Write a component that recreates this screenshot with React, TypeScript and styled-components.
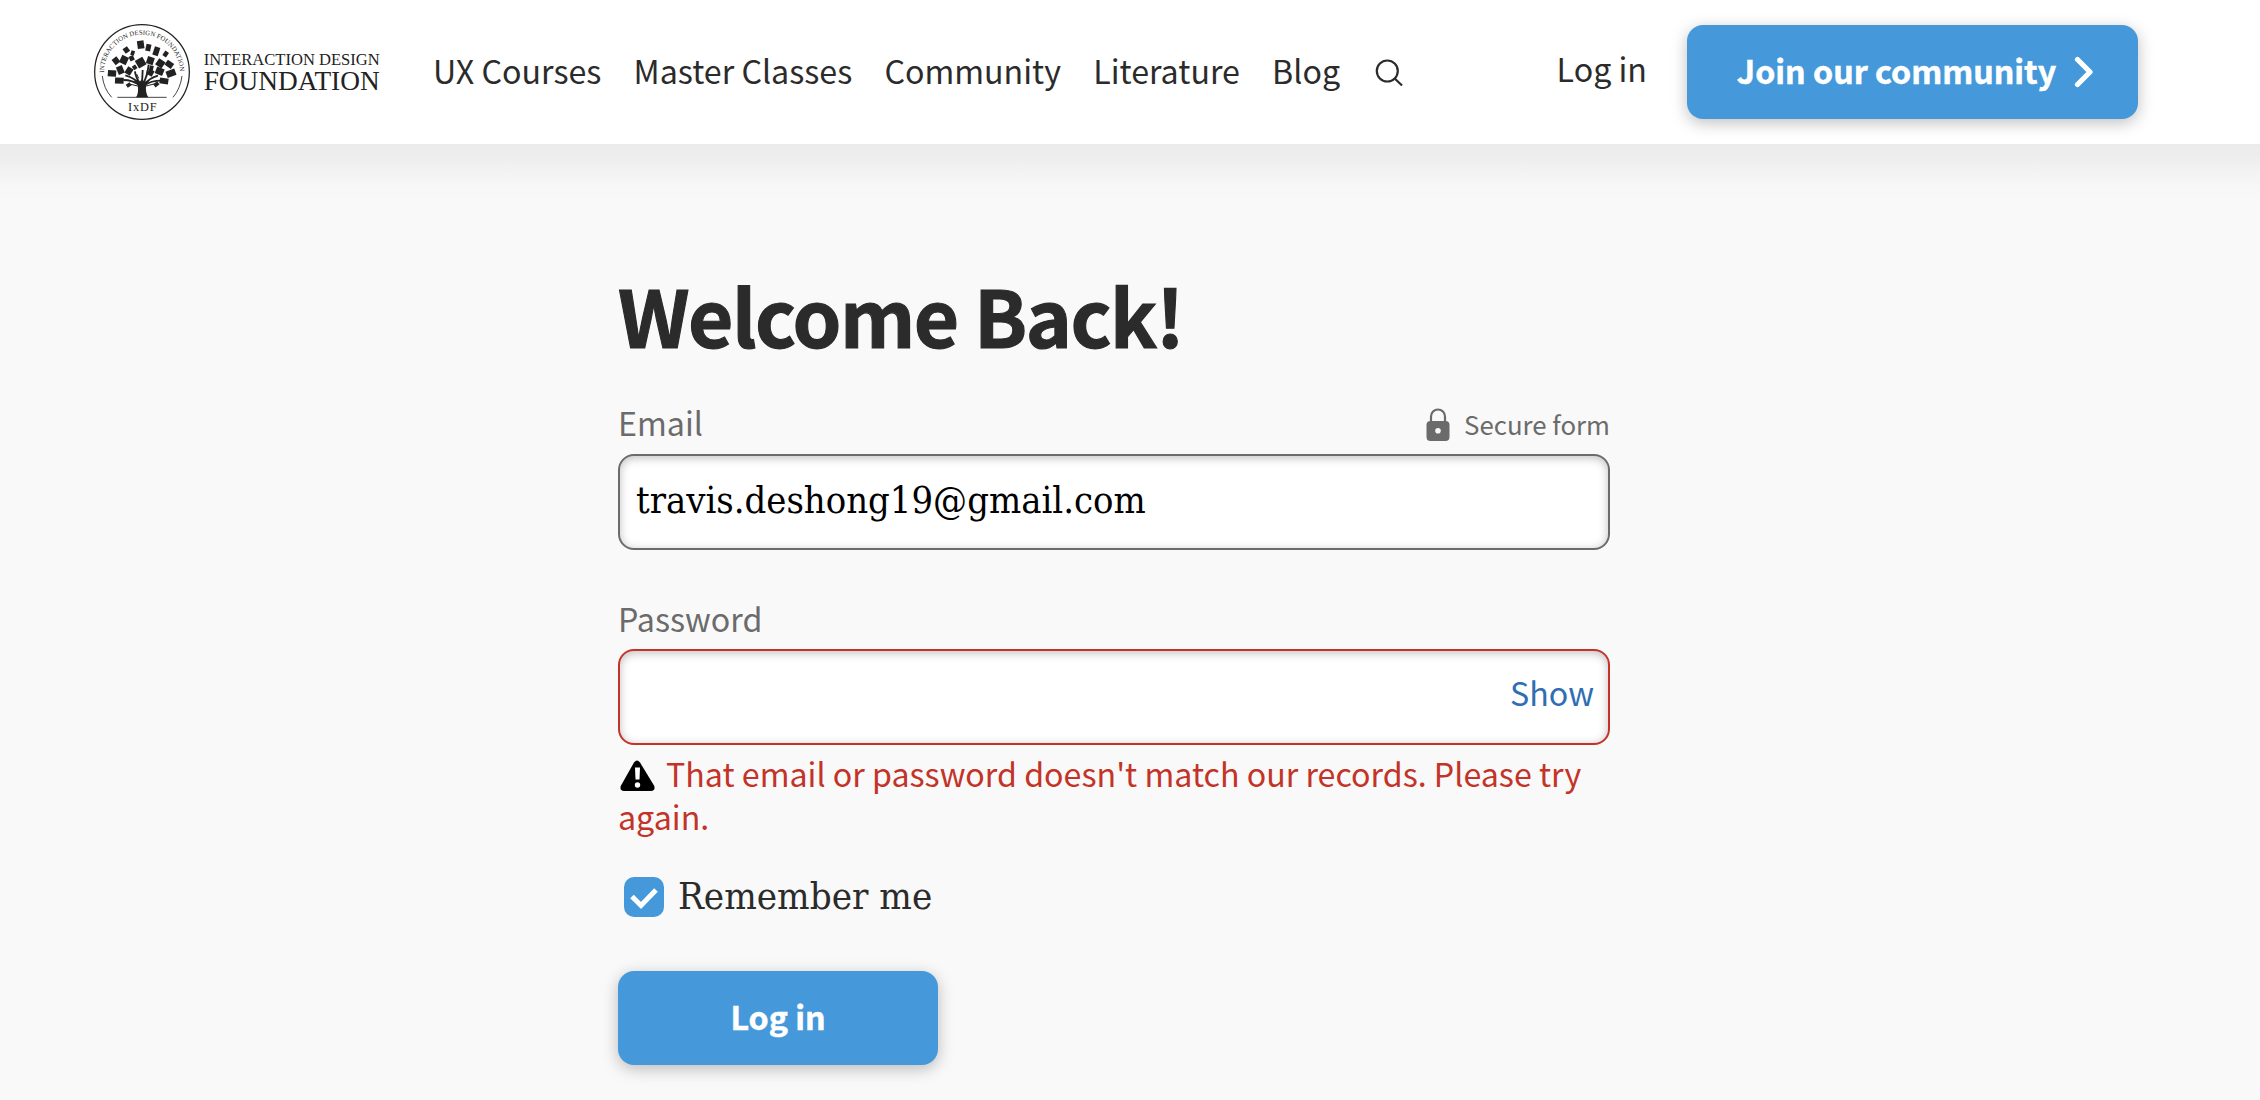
import { useState } from 'react'
import styled, { createGlobalStyle, css } from 'styled-components'

const sans = `'Noto Sans CJK SC', 'Noto Sans', sans-serif`
const serif = `'DejaVu Serif Condensed', 'DejaVu Serif', serif`

const GlobalStyle = createGlobalStyle`
  * {
    box-sizing: border-box;
  }

  body {
    margin: 0;
    min-height: 1100px;
    background: #f9f9f9;
    color: #2b2b2b;
    font-family: ${sans};
    font-size: 32.2px;
  }
`

const Header = styled.header`
  display: flex;
  align-items: center;
  height: 144px;
  padding: 0 122px 0 93px;
  background: #fff;
`

const Main = styled.main`
  padding: 124px 0 0 618px;
  background: linear-gradient(#ebebeb, #eeeeee 14px, #f5f5f5 34px, #f9f9f9 56px);
`

const Logo = styled.svg`
  display: block;
  width: 288px;
  height: 98px;
  flex: none;
  overflow: visible;
`

const Nav = styled.nav`
  display: flex;
  align-items: center;
  gap: 32.2px;
  margin-left: 52px;
  padding-bottom: 4px;
`

const NavLink = styled.a`
  color: inherit;
  line-height: 48px;
  white-space: nowrap;
`

const LoginLink = styled(NavLink)`
  margin-left: auto;
  margin-right: 40px;
  padding-bottom: 8px;
`

const SearchIcon = styled.svg`
  width: 28px;
  height: 28px;
  margin: 5px 0 0 3px;
`

const button = css`
  display: flex;
  align-items: center;
  justify-content: center;
  height: 94px;
  padding: 0 0 5px;
  border: 0;
  border-radius: 16px;
  background: #4599da;
  box-shadow: 0 4px 16px rgba(0, 0, 0, 0.25);
  color: #fff;
  font-family: ${sans};
  font-size: 32.2px;
  font-weight: 700;
  -webkit-text-stroke: 0.5px #fff;
`

const JoinButton = styled.button`
  ${button}
  width: 451px;
  padding-left: 6px;
  gap: 18px;
`

const SubmitButton = styled.button`
  ${button}
  width: 320px;
  margin-top: 54px;
`

const Chevron = styled.svg`
  width: 20px;
  height: 32px;
  margin-top: 4px;
`

const Form = styled.form`
  display: flex;
  flex-direction: column;
  width: 992px;
`

const Title = styled.h1`
  margin: 0;
  font-size: 78.2px;
  font-weight: 700;
  line-height: 92px;
  letter-spacing: -1.5px;
  -webkit-text-stroke: 1.1px #2b2b2b;
`

const LabelRow = styled.div`
  display: flex;
  align-items: center;
  justify-content: space-between;
  height: 44px;
  color: #6b6b6b;
`

const EmailRow = styled(LabelRow)`
  margin-top: 40px;
  margin-bottom: 1px;
`

const PasswordRow = styled(LabelRow)`
  margin-top: 46px;
`

const Label = styled.label`
  line-height: 44px;
`

const Secure = styled.span`
  display: flex;
  align-items: center;
  gap: 14px;
  padding-top: 2px;
  font-size: 25.8px;
`

const LockIcon = styled.svg`
  width: 24px;
  height: 34px;
  margin-top: 4px;
`

const Field = styled.div<{ $invalid?: boolean }>`
  display: flex;
  align-items: center;
  height: 96px;
  margin-top: 9px;
  padding: 0 14px 0 16px;
  border: 2px solid ${({ $invalid }) => ($invalid ? '#c33327' : '#6b6b6b')};
  border-radius: 16px;
  background: #fff;
  box-shadow: inset 0 2px 10px rgba(0, 0, 0, 0.25);
`

const Input = styled.input`
  flex: 1;
  min-width: 0;
  padding: 0 0 4px;
  border: 0;
  outline: 0;
  background: transparent;
  color: #000;
  font-family: ${serif};
  font-size: 37.8px;
`

const ShowButton = styled.button`
  padding: 0 0 10px;
  border: 0;
  background: none;
  color: #2f6eb3;
  font-family: ${sans};
  font-size: 32.2px;
`

const ErrorText = styled.p`
  margin: 7px 0 0;
  color: #c33327;
  line-height: 43px;
`

const WarningIcon = styled.svg`
  width: 36px;
  height: 32px;
  margin: 0 11px 0 1px;
  vertical-align: -5px;
`

const Remember = styled.label`
  display: flex;
  align-items: center;
  gap: 14px;
  height: 40px;
  margin: 39px 0 0 6px;
  font-family: ${serif};
  font-size: 38.2px;
`

const RememberText = styled.span`
  padding-bottom: 3px;
`

const Checkbox = styled.svg`
  width: 40px;
  height: 40px;
`

const links = ['UX Courses', 'Master Classes', 'Community', 'Literature', 'Blog']

// Leaves of the tree: centre x, centre y, width, height, rotation
const leaves = [
  [182, 104, 20, 24, -8],
  [205, 113, 15, 21, 12],
  [229, 124, 17, 26, 18],
  [257, 132, 13, 16, 35],
  [139, 120, 16, 17, -35],
  [158, 129, 11, 14, 18],
  [108, 152, 18, 20, -38],
  [132, 150, 22, 24, 25],
  [155, 145, 14, 15, -25],
  [182, 158, 26, 26, -30],
  [211, 152, 21, 22, 18],
  [241, 160, 23, 22, 35],
  [268, 163, 23, 18, 35],
  [96, 190, 25, 19, 4],
  [121, 180, 19, 24, -22],
  [147, 183, 19, 22, 32],
  [164, 172, 12, 13, -35],
  [214, 174, 12, 15, 12],
  [212, 188, 17, 18, 28],
  [239, 184, 24, 21, 22],
  [273, 190, 28, 20, -20],
  [118, 212, 26, 18, 2],
  [252, 213, 26, 18, 8],
  [146, 225, 14, 11, -35],
  [229, 223, 15, 12, -38],
]

function BrandLogo() {
  return (
    <Logo viewBox="39 39 864 294" fill="#222">
      <circle cx="186" cy="186" r="142" fill="none" stroke="#222" strokeWidth="3.8" />
      <path id="ring" d="M72 188A114 114 0 0 1 300 188" fill="none" />
      <text fontFamily="Liberation Serif, serif" fontSize="20">
        <textPath href="#ring" textLength="354">
          INTERACTION DESIGN FOUNDATION
        </textPath>
      </text>
      <path
        d="M67 198Q71 236 95 262M306 198Q301 236 279 262M112 262H260"
        fill="none"
        stroke="#222"
        strokeWidth="2.5"
      />
      {leaves.map(([x, y, w, h, r], index) => (
        <rect
          key={index}
          x={x - w / 2}
          y={y - h / 2}
          width={w}
          height={h}
          transform={`rotate(${r} ${x} ${y})`}
        />
      ))}
      <path d="M168 262Q177 250 173 224L160 211L178 216L186 208L194 216L210 210L198 226Q196 250 205 262Z" />
      <path
        d="M184 226Q165 204 136 196M181 222Q166 200 165 184M186 222L188 180M188 224Q202 200 206 164M190 226Q208 204 234 197M180 226Q158 210 130 210M194 226Q212 212 244 212"
        fill="none"
        stroke="#222"
        strokeWidth="5.5"
      />
      <path
        d="M178 229L152 223M194 229L222 222M176 205L170 192M200 200L202 180"
        fill="none"
        stroke="#222"
        strokeWidth="3"
      />
      <g fontFamily="Liberation Serif, serif">
        <text x="144" y="303" fontSize="37" textLength="86">
          IxDF
        </text>
        <text x="371" y="164" fontSize="51" textLength="528" lengthAdjust="spacingAndGlyphs">
          INTERACTION DESIGN
        </text>
        <text x="371" y="240" fontSize="83" textLength="528" lengthAdjust="spacingAndGlyphs">
          FOUNDATION
        </text>
      </g>
    </Logo>
  )
}

export default function App() {
  const [email, setEmail] = useState('travis.deshong19@gmail.com')
  const [password, setPassword] = useState('')
  const [visible, setVisible] = useState(false)

  return (
    <>
      <GlobalStyle />
      <Header>
        <BrandLogo />
        <Nav>
          {links.map((link) => (
            <NavLink key={link}>{link}</NavLink>
          ))}
          <SearchIcon viewBox="0 0 28 28" fill="none" stroke="#2b2b2b" strokeWidth="2.2">
            <circle cx="12.3" cy="12" r="10.5" />
            <path d="M19.7 19.5L27 26.5" />
          </SearchIcon>
        </Nav>
        <LoginLink>Log in</LoginLink>
        <JoinButton type="button">
          Join our community
          <Chevron viewBox="0 0 20 32" fill="none" stroke="#fff" strokeWidth="5.2">
            <path d="M3.5 3.5L16 16L3.5 28.5" strokeLinecap="round" strokeLinejoin="round" />
          </Chevron>
        </JoinButton>
      </Header>
      <Main>
        <Form onSubmit={(e) => e.preventDefault()}>
          <Title>Welcome Back!</Title>
          <EmailRow>
            <Label htmlFor="email">Email</Label>
            <Secure>
              <LockIcon viewBox="0 0 24 34" fill="#6b6b6b">
                <path d="M5 14V8.500a7 7 0 0 1 14 0V14" fill="none" stroke="#6b6b6b" strokeWidth="2.2" />
                <path
                  fillRule="evenodd"
                  d="M4.500 13h15a4 4 0 0 1 4 4v12a4 4 0 0 1-4 4h-15a4 4 0 0 1-4-4V17a4 4 0 0 1 4-4zM12 20a2.800 2.800 0 1 0 0 5.600a2.800 2.800 0 1 0 0-5.600z"
                />
              </LockIcon>
              Secure form
            </Secure>
          </EmailRow>
          <Field>
            <Input id="email" value={email} onChange={(e) => setEmail(e.target.value)} />
          </Field>
          <PasswordRow>
            <Label htmlFor="password">Password</Label>
          </PasswordRow>
          <Field $invalid>
            <Input
              id="password"
              type={visible ? 'text' : 'password'}
              value={password}
              onChange={(e) => setPassword(e.target.value)}
            />
            <ShowButton type="button" onClick={() => setVisible(!visible)}>
              {visible ? 'Hide' : 'Show'}
            </ShowButton>
          </Field>
          <ErrorText>
            <WarningIcon viewBox="0 0 36 32">
              <path d="M15 2.500q3-4 6 0L35 25.500q2 5-3 5.500H5q-5-.5-3-5.500z" />
              <path d="M16 7.500h5l-.5 12h-4z" fill="#fff" />
              <circle cx="18.500" cy="25" r="2.700" fill="#fff" />
            </WarningIcon>
            That email or password doesn't match our records. Please try again.
          </ErrorText>
          <Remember>
            <Checkbox viewBox="0 0 40 40">
              <rect width="40" height="40" rx="10" fill="#4599da" />
              <path d="M8 19.500L17 28.500L32 13" fill="none" stroke="#fff" strokeWidth="5" />
            </Checkbox>
            <RememberText>Remember me</RememberText>
          </Remember>
          <SubmitButton type="submit">Log in</SubmitButton>
        </Form>
      </Main>
    </>
  )
}
